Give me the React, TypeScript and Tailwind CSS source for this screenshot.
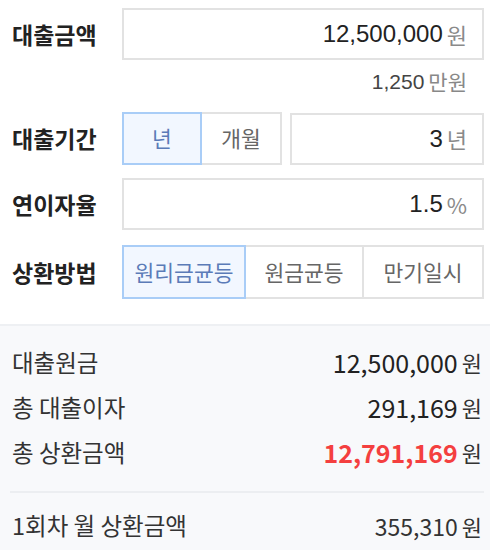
import { useState } from "react";

const FONT = { fontFamily: '"Liberation Sans", "Noto Sans CJK KR", sans-serif' };
const KR = { fontFamily: '"Noto Sans CJK KR", sans-serif' };

function Label({ children }: { children: React.ReactNode }) {
  return (
    <div className="w-[122px] shrink-0 pl-3 text-[23px] font-bold text-[#222]" style={KR}>
      {children}
    </div>
  );
}

function Field({ value, unit }: { value: string; unit: string }) {
  return (
    <div className="flex h-[52px] flex-1 items-center justify-end gap-1 border-2 border-[#e2e2e2] bg-white pr-[15px]">
      <span className="text-[24px] text-[#222]">{value}</span>
      <span className="text-[22px] text-[#8a8a8a]" style={KR}>{unit}</span>
    </div>
  );
}

function Segments({ items, active, onPick, widths, h }: {
  items: string[]; active: number; onPick: (i: number) => void; widths: string[]; h: string;
}) {
  return (
    <div className={`flex ${h}`}>
      {items.map((it, i) => (
        <button
          key={it}
          onClick={() => onPick(i)}
          className={`${widths[i]} text-[21.5px] border-2 ${i > 0 ? "-ml-[2px]" : ""} ${
            i === active
              ? "relative z-10 border-[#a9cdf7] bg-[#f2f7ff] text-[#5b7bb8]"
              : "border-[#e2e2e2] bg-white text-[#666]"
          }`}
          style={KR}
        >
          {it}
        </button>
      ))}
    </div>
  );
}

function ResultRow({ label, value, red }: { label: string; value: string; red?: boolean }) {
  return (
    <div className="flex h-[45px] items-center justify-between pl-3 pr-2">
      <span className="text-[23.5px] text-[#333]">{label}</span>
      <span className="flex items-center gap-1">
        <span className={`text-[25px] ${red ? "font-bold text-[#f43f3f]" : "text-[#222]"}`}>{value}</span>
        <span className="text-[22px] text-[#333]">원</span>
      </span>
    </div>
  );
}

export default function App() {
  const [period, setPeriod] = useState(0);
  const [method, setMethod] = useState(0);

  return (
    <div className="w-[490px] h-[550px] overflow-hidden bg-white" style={FONT}>
      <div className="pr-[6px] pt-2">
        <div className="flex items-center">
          <Label>대출금액</Label>
          <Field value="12,500,000" unit="원" />
        </div>
        <div className="flex h-[44px] items-center justify-end gap-1 pr-[17px]">
          <span className="text-[21px] text-[#444]">1,250</span>
          <span className="text-[21px] text-[#888]" style={KR}>만원</span>
        </div>
        <div className="mt-2 flex items-center">
          <Label>대출기간</Label>
          <Segments items={["년", "개월"]} active={period} onPick={setPeriod} widths={["w-[80px]", "w-[82px]"]} h="h-[53px]" />
          <div className="ml-2 flex flex-1">
            <Field value="3" unit={period === 0 ? "년" : "개월"} />
          </div>
        </div>
        <div className="mt-[13px] flex items-center">
          <Label>연이자율</Label>
          <Field value="1.5" unit="%" />
        </div>
        <div className="mt-[15px] flex items-center">
          <Label>상환방법</Label>
          <div className="flex-1">
            <Segments
              items={["원리금균등", "원금균등", "만기일시"]}
              active={method}
              onPick={setMethod}
              widths={["w-[124px]", "w-[120px]", "w-[122px]"]}
              h="h-[54px]"
            />
          </div>
        </div>
      </div>

      <div className="mt-[25px] border-t-2 border-[#eef0f3] bg-[#f8f9fb] pt-[14px]" style={KR}>
        <ResultRow label="대출원금" value="12,500,000" />
        <ResultRow label="총 대출이자" value="291,169" />
        <ResultRow label="총 상환금액" value="12,791,169" red />
        <div className="ml-[10px] mr-[6px] mt-4 border-t-2 border-[#eceef1]" />
        <div className="flex h-[66px] items-center justify-between pl-3 pr-2">
          <span className="text-[23.5px] text-[#333]">1회차 월 상환금액</span>
          <span className="flex items-center gap-1">
            <span className="text-[23px] text-[#333]">355,310</span>
            <span className="text-[22px] text-[#333]">원</span>
          </span>
        </div>
      </div>
    </div>
  );
}
